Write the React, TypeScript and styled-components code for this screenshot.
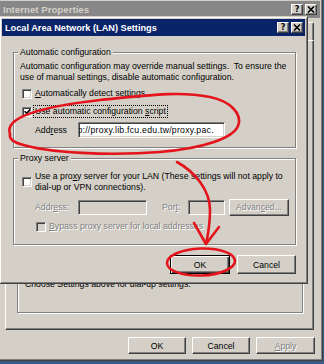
import React from 'react';
import styled, { createGlobalStyle } from 'styled-components';

const FACE = '#d4d0c8';

const GlobalStyle = createGlobalStyle`
  html, body { margin: 0; padding: 0; }
  body {
    background: #3b5b87;
    font-family: "Liberation Sans", Arial, sans-serif;
    font-size: 8.7px;
    color: #000;
  }
  * { box-sizing: border-box; }
`;

const Desktop = styled.div`
  position: relative;
  width: 324px;
  height: 364px;
  overflow: hidden;
  background: #3b5b87;
`;

const Window = styled.div<{ $left: number; $top: number; $width: number; $height: number }>`
  position: absolute;
  left: ${p => p.$left}px;
  top: ${p => p.$top}px;
  width: ${p => p.$width}px;
  height: ${p => p.$height}px;
  display: flex;
  flex-direction: column;
  background: ${FACE};
  border: 1px solid;
  border-color: ${FACE} #404040 #404040 ${FACE};
  box-shadow: inset 1px 1px 0 #fff, inset -1px -1px 0 #808080;
  padding: 2px;
`;

const TitleBar = styled.div<{ $active?: boolean }>`
  flex: none;
  height: 17px;
  display: flex;
  align-items: center;
  padding: ${p => (p.$active ? '0 2px 0 3px' : '0 3px 0 4px')};
  background: ${p => (p.$active ? '#0a246a' : '#878787')};
  color: ${p => (p.$active ? '#fff' : '#d4d0c8')};
  font-weight: bold;
  font-size: ${p => (p.$active ? '9.2px' : '9.7px')};
  white-space: nowrap;
`;

const TitleText = styled.span`
  flex: 1;
`;

const CaptionButtons = styled.div`
  display: flex;
  gap: 2px;
`;

const CaptionButton = styled.div`
  width: 12px;
  height: 11px;
  display: flex;
  align-items: center;
  justify-content: center;
  background: ${FACE};
  border: 1px solid;
  border-color: #fff #404040 #404040 #fff;
  box-shadow: inset -1px -1px 0 #808080;
  color: #000;
  font-family: "DejaVu Sans", sans-serif;
  font-size: 8px;
  font-weight: bold;
  line-height: 1;
`;

/* ---------- outer window (Internet Properties) ---------- */

const OuterBody = styled.div`
  flex: 1;
  display: flex;
  flex-direction: column;
  padding: 4px 6px 4px 6px;
`;

const TabStrip = styled.div`
  flex: none;
  height: 18px;
  display: flex;
`;

/* the tab captions are entirely covered by the LAN dialog, only the tab edges remain */
const Tab = styled.div`
  flex: 1 1 0;
  border: 1px solid;
  border-bottom: none;
  border-color: #fff #404040 transparent #fff;
  border-radius: 2px 2px 0 0;
  box-shadow: inset -1px 0 0 #808080;
`;

const TabPanel = styled.div`
  flex: 1;
  display: flex;
  flex-direction: column;
  justify-content: flex-end;
  border: 1px solid;
  border-color: #fff #404040 #404040 #fff;
  box-shadow: inset -1px -1px 0 #808080;
  padding: 0 10px 16px 11px;
`;

const OuterGroup = styled.div`
  position: relative;
  display: flex;
  align-items: flex-start;
  justify-content: space-between;
  border: 1px solid #808080;
  box-shadow: inset 1px 1px 0 #fff, 1px 1px 0 #fff;
  padding: 14px 5px 22px 7px;
`;

const TextLines = styled.div`
  line-height: 11px;
  white-space: nowrap;
`;

const OuterButtons = styled.div`
  flex: none;
  display: flex;
  justify-content: flex-end;
  gap: 6px;
  margin: 7px -1px 0 0;
`;

/* ---------- inner dialog (LAN Settings) ---------- */

const DialogBody = styled.div`
  display: flex;
  flex-direction: column;
  padding: 16px 9px 7px 11px;
`;

const GroupBox = styled.div<{ $pt: number; $pb: number }>`
  position: relative;
  display: flex;
  flex-direction: column;
  border: 1px solid #808080;
  box-shadow: inset 1px 1px 0 #fff, 1px 1px 0 #fff;
  padding: ${p => p.$pt}px 6px ${p => p.$pb}px 6px;
  & + & {
    margin-top: 10px;
  }
`;

const GroupLabel = styled.span`
  position: absolute;
  top: -6px;
  left: 4px;
  padding: 0 2px;
  background: ${FACE};
  line-height: 11px;
  white-space: nowrap;
`;

const Row = styled.div<{ $mt: number; $indent: number; $gap?: number }>`
  display: flex;
  align-items: center;
  margin-top: ${p => p.$mt}px;
  padding-left: ${p => p.$indent}px;
  gap: ${p => p.$gap ?? 0}px;
  min-height: 13px;
  line-height: 11px;
  white-space: nowrap;
`;

const Check = styled.span<{ $disabled?: boolean }>`
  flex: none;
  width: 10px;
  height: 10px;
  display: flex;
  align-items: center;
  justify-content: center;
  background: ${p => (p.$disabled ? FACE : '#fff')};
  border: 1px solid;
  border-color: #808080 #fff #fff #808080;
  box-shadow: inset 1px 1px 0 #404040, inset -1px -1px 0 ${FACE};
`;

const Label = styled.span<{ $disabled?: boolean; $w?: number }>`
  ${p => (p.$w ? `width: ${p.$w}px; flex: none;` : '')}
  color: ${p => (p.$disabled ? '#808080' : '#000')};
  text-shadow: ${p => (p.$disabled ? '1px 1px 0 #fff' : 'none')};
`;

const PortLabel = styled(Label)`
  margin-left: 15px;
`;

const Focus = styled.span`
  outline: 1px dotted #000;
  outline-offset: 0;
  padding: 0 1px;
  margin-left: -1px;
`;

const Field = styled.div<{ $w: number; $h: number; $disabled?: boolean }>`
  flex: none;
  width: ${p => p.$w}px;
  height: ${p => p.$h}px;
  display: flex;
  align-items: center;
  overflow: hidden;
  white-space: nowrap;
  padding-left: 2px;
  background: ${p => (p.$disabled ? FACE : '#fff')};
  border: 1px solid;
  border-color: #808080 #fff #fff #808080;
  box-shadow: inset 1px 1px 0 #404040, inset -1px -1px 0 ${FACE};
`;

const FieldText = styled.span`
  margin-left: -14px;
  letter-spacing: 0.25px;
`;

const Button = styled.button<{ $w: number; $h: number; $default?: boolean; $disabled?: boolean }>`
  flex: none;
  width: ${p => p.$w}px;
  height: ${p => p.$h}px;
  padding: 0;
  font: inherit;
  font-size: 8.7px;
  background: ${FACE};
  color: ${p => (p.$disabled ? '#808080' : '#000')};
  text-shadow: ${p => (p.$disabled ? '1px 1px 0 #fff' : 'none')};
  border: 1px solid;
  border-color: ${p => (p.$default ? '#000' : '#fff #404040 #404040 #fff')};
  box-shadow: ${p =>
    p.$default
      ? 'inset 1px 1px 0 #fff, inset -1px -1px 0 #404040, inset -2px -2px 0 #808080'
      : 'inset -1px -1px 0 #808080'};
`;

const LanButton = styled(Button)`
  margin-top: -3px;
`;

const AdvancedButton = styled(Button)`
  margin-left: 4px;
`;

const DialogButtons = styled.div`
  display: flex;
  justify-content: flex-end;
  gap: 7px;
  margin-top: 10px;
`;

const Annotations = styled.svg`
  position: absolute;
  left: 0;
  top: 0;
  pointer-events: none;
`;

const CloseGlyph = () => (
  <svg width="8" height="7" viewBox="0 0 8 7">
    <path d="M1 0.5 L7 6.5 M7 0.5 L1 6.5" stroke="#000" strokeWidth="1.6" fill="none" />
  </svg>
);

const CheckGlyph = () => (
  <svg width="7" height="7" viewBox="0 0 7 7">
    <path d="M0.6 3.3 L2.6 5.3 L6.4 1.4" stroke="#000" strokeWidth="1.6" fill="none" />
  </svg>
);

const TAB_COUNT = 7;

export default function App() {
  return (
    <>
      <GlobalStyle />
      <Desktop>
        <Window $left={-4} $top={-2} $width={327} $height={363}>
          <TitleBar>
            <TitleText>Internet Properties</TitleText>
            <CaptionButtons>
              <CaptionButton>?</CaptionButton>
              <CaptionButton>
                <CloseGlyph />
              </CaptionButton>
            </CaptionButtons>
          </TitleBar>
          <OuterBody>
            <TabStrip>
              {Array.from({ length: TAB_COUNT }, (_, i) => (
                <Tab key={i} />
              ))}
            </TabStrip>
            <TabPanel>
              <OuterGroup>
                <GroupLabel>Local Area Network (LAN) settings</GroupLabel>
                <TextLines>
                  LAN Settings do not apply to dial-up connections.
                  <br />
                  Choose Settings above for dial-up settings.
                </TextLines>
                <LanButton $w={67} $h={18}>
                  <u>L</u>AN Settings...
                </LanButton>
              </OuterGroup>
            </TabPanel>
            <OuterButtons>
              <Button $w={58} $h={17}>OK</Button>
              <Button $w={58} $h={17}>Cancel</Button>
              <Button $w={59} $h={17} $disabled>
                <u>A</u>pply
              </Button>
            </OuterButtons>
          </OuterBody>
        </Window>

        <Window $left={-1} $top={16} $width={309} $height={268}>
          <TitleBar $active>
            <TitleText>Local Area Network (LAN) Settings</TitleText>
            <CaptionButtons>
              <CaptionButton>?</CaptionButton>
              <CaptionButton>
                <CloseGlyph />
              </CaptionButton>
            </CaptionButtons>
          </TitleBar>
          <DialogBody>
            <GroupBox $pt={8} $pb={9}>
              <GroupLabel>Automatic configuration</GroupLabel>
              <TextLines>
                Automatic configuration may override manual settings.&nbsp; To ensure the
                <br />
                use of manual settings, disable automatic configuration.
              </TextLines>
              <Row $mt={4} $indent={2} $gap={3}>
                <Check />
                <Label>
                  <u>A</u>utomatically detect settings
                </Label>
              </Row>
              <Row $mt={5} $indent={2} $gap={3}>
                <Check>
                  <CheckGlyph />
                </Check>
                <Focus>
                  Use automatic configuration <u>s</u>cript
                </Focus>
              </Row>
              <Row $mt={4} $indent={15}>
                <Label $w={43}>
                  Add<u>r</u>ess
                </Label>
                <Field $w={147} $h={16}>
                  <FieldText>http://proxy.lib.fcu.edu.tw/proxy.pac.</FieldText>
                </Field>
              </Row>
            </GroupBox>

            <GroupBox $pt={12} $pb={11}>
              <GroupLabel>Proxy server</GroupLabel>
              <Row $mt={0} $indent={2} $gap={3}>
                <Check />
                <Label>
                  Use a pro<u>x</u>y server for your LAN (These settings will not apply to
                  <br />
                  dial-up or VPN connections).
                </Label>
              </Row>
              <Row $mt={6} $indent={15}>
                <Label $w={43} $disabled>
                  Addr<u>e</u>ss:
                </Label>
                <Field $w={69} $h={15} $disabled />
                <PortLabel $w={26} $disabled>
                  Por<u>t</u>:
                </PortLabel>
                <Field $w={37} $h={15} $disabled />
                <AdvancedButton $w={60} $h={17} $disabled>
                  Advan<u>c</u>ed...
                </AdvancedButton>
              </Row>
              <Row $mt={4} $indent={16} $gap={3}>
                <Check $disabled />
                <Label $disabled>
                  <u>B</u>ypass proxy server for local addresses
                </Label>
              </Row>
            </GroupBox>

            <DialogButtons>
              <Button $w={60} $h={19} $default>
                OK
              </Button>
              <Button $w={59} $h={19}>
                Cancel
              </Button>
            </DialogButtons>
          </DialogBody>
        </Window>

        <Annotations width={324} height={364} viewBox="0 0 324 364">
          <g stroke="#e3141b" strokeWidth={2.6} fill="none" strokeLinecap="round" strokeLinejoin="round">
            <path d="M10 134 C4 118 38 107 100 100 C150 95 180 91 210 97 C230 101 243 114 238 126 C233 138 205 148 160 152 C110 156 48 153 20 144 C11 141 9 138 10 134 Z" />
            <path d="M177 162 C195 172 210 190 210 210 C210 225 208 235 206 244" />
            <path d="M194 223 L206 244 L219 227" />
            <ellipse cx={201} cy={262} rx={34} ry={13.5} transform="rotate(-2 201 262)" />
          </g>
        </Annotations>
      </Desktop>
    </>
  );
}
